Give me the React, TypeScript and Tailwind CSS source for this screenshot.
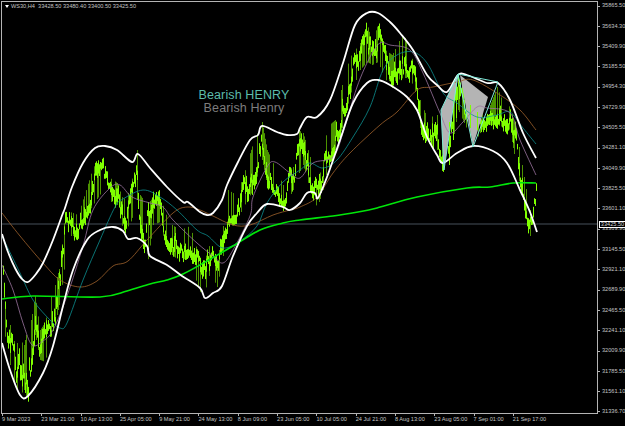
const PRICES = [
  "35865.50", "35634.30", "35409.90", "35185.50", "34954.30", "34729.90", "34505.50",
  "34281.10", "34049.90", "33825.50", "33601.10", "33369.90", "33145.50", "32921.10",
  "32689.90", "32465.50", "32241.10", "32009.90", "31785.50", "31561.10", "31336.70",
];

const TIMES = [
  "9 Mar 2023", "23 Mar 21:00", "10 Apr 13:00", "25 Apr 05:00", "9 May 21:00", "24 May 13:00", "8 Jun 09:00",
  "23 Jun 05:00", "10 Jul 05:00", "24 Jul 21:00", "8 Aug 13:00", "23 Aug 05:00", "7 Sep 01:00", "21 Sep 17:00",
];

// curves read off the picture, page coordinates
const UPPER = "2,234 8,252 15,268 22,279 28,282 36,274 43,263 53,240 63,213 65,208 72,187 83,163 95,148 105,146 117,150 132,162 138,154 150,168 167,187 183,202 188,202 200,212 207,215 213,213 222,200 227,185 238,162 250,140 258,135 262,126 277,132 287,135 297,134 300,128 307,117 317,117 330,100 343,63 355,25 367,13 378,13 390,22 400,33 413,50 427,75 437,85 447,92 458,75 467,75 487,83 498,83 510,100 523,133 536,158";
const LOWER = "2,343 10,370 20,395 28,396 43,373 53,346 63,306 73,270 87,240 100,230 113,227 123,231 128,239 137,238 147,246 150,256 167,265 182,276 200,288 205,298 213,293 222,286 233,256 247,226 257,213 267,204 283,207 290,210 300,203 307,193 315,193 318,198 327,177 340,140 353,103 367,83 378,80 390,85 407,97 417,110 427,137 437,155 443,163 457,153 473,146 493,151 507,163 520,190 530,212 537,232";
const GREEN_MA = "2,299 33,296 100,297 127,291 150,284 167,280 183,274 207,261 233,246 260,230 283,223 300,220 333,216 358,212 377,208 417,197 467,188 490,187 513,183 536,183";
const BROWN = "2,213 20,236 43,263 60,280 80,287 97,281 113,266 128,261 147,240 173,213 187,207 200,210 213,216 233,225 250,225 273,215 290,210 300,207 317,197 333,173 350,153 380,125 397,112 417,90 433,87 457,82 473,80 500,95 520,110 536,130";
const TEAL = "2,236 20,273 33,300 50,320 60,328 67,323 83,280 100,240 115,207 123,199 143,190 160,197 177,210 197,230 208,236 223,248 240,241 257,226 267,203 283,182 300,170 310,163 323,168 337,160 353,137 370,107 383,70 397,55 413,52 427,63 443,93 457,103 477,117 497,115 510,112 523,128 536,144";
const MAUVE = "2,265 13,290 23,323 32,345 43,341 53,330 67,296 83,246 93,210 110,188 120,185 132,197 150,203 163,207 173,220 197,243 213,256 223,263 233,250 250,216 253,197 267,167 275,162 290,173 300,178 313,163 333,157 343,133 357,87 370,57 380,43 390,45 410,50 423,73 440,113 450,133 463,122 477,107 487,108 510,113 520,140 536,175";

// [x, high y, low y]
const PRICE_KEYS: [number, number, number][] = [
  [3, 265, 300], [6, 320, 355], [10, 325, 365], [15, 345, 385], [20, 340, 395], [24, 345, 390], [28, 325, 402],
  [31, 320, 370], [35, 296, 335], [40, 330, 360], [45, 322, 362], [50, 300, 340], [55, 285, 325], [60, 265, 300],
  [65, 213, 262], [70, 212, 236], [78, 215, 236], [87, 187, 215], [93, 167, 205], [103, 160, 190], [107, 176, 200],
  [117, 183, 205], [123, 200, 230], [130, 190, 225], [137, 150, 200], [140, 195, 232], [147, 205, 266], [153, 197, 225],
  [160, 195, 222], [165, 213, 245], [172, 225, 255], [180, 230, 262], [190, 226, 255], [197, 250, 285], [203, 265, 299],
  [210, 243, 272], [217, 262, 287], [223, 226, 256], [228, 190, 225], [236, 195, 222], [243, 177, 208], [253, 143, 190],
  [262, 122, 160], [267, 150, 185], [277, 172, 200], [283, 185, 208], [288, 170, 200], [293, 167, 190], [298, 130, 175],
  [303, 133, 165], [310, 157, 190], [317, 185, 208], [323, 160, 190], [327, 127, 170], [335, 120, 150], [343, 80, 125],
  [350, 57, 95], [360, 43, 70], [367, 23, 62], [372, 45, 65], [378, 23, 62], [385, 50, 80], [392, 55, 82], [403, 33, 78],
  [410, 50, 78], [415, 72, 92], [420, 100, 128], [427, 118, 145], [437, 115, 150], [443, 135, 170], [453, 97, 140],
  [458, 77, 110], [465, 95, 125], [473, 105, 145], [483, 100, 128], [490, 105, 125], [497, 87, 125], [505, 108, 128],
  [510, 106, 130], [517, 135, 172], [522, 165, 195], [527, 195, 225], [530, 210, 236], [533, 200, 226], [536, 183, 224],
];

const lerpKey = (x: number) => {
  for (let i = 1; i < PRICE_KEYS.length; i++) {
    const [x1, h1, l1] = PRICE_KEYS[i];
    if (x <= x1) {
      const [x0, h0, l0] = PRICE_KEYS[i - 1];
      const t = (x - x0) / (x1 - x0);
      return [h0 + (h1 - h0) * t, l0 + (l1 - l0) * t];
    }
  }
  return [PRICE_KEYS[PRICE_KEYS.length - 1][1], PRICE_KEYS[PRICE_KEYS.length - 1][2]];
};

const buildBars = () => {
  let seed = 71;
  const next = () => {
    seed = (seed * 16807) % 2147483647;
    return seed / 2147483647;
  };
  let bodies = "";
  let wicks = "";
  let pos = 0.5;
  for (let x = 3; x <= 536; x++) {
    const [hi, lo] = lerpKey(x);
    const span = lo - hi;
    pos = Math.min(0.9, Math.max(0.1, pos + (next() - 0.5) * 0.7));
    const mid = hi + span * pos;
    const len = 2.5 + next() * 6;
    bodies += `M${x + 0.5} ${(mid - len).toFixed(1)}V${(mid + len).toFixed(1)}`;
    // long wicks every few bars, dimmer in the picture
    if (next() < 0.35) wicks += `M${x + 0.5} ${hi.toFixed(1)}V${lo.toFixed(1)}`;
  }
  return { bodies, wicks };
};

// smooth line through the points
const smooth = (points: string) => {
  const p = points.split(" ").map((s) => s.split(",").map(Number));
  let d = `M${p[0][0]} ${p[0][1]}`;
  for (let i = 0; i < p.length - 1; i++) {
    const a = p[Math.max(i - 1, 0)];
    const b = p[i];
    const c = p[i + 1];
    const e = p[Math.min(i + 2, p.length - 1)];
    const c1x = b[0] + (c[0] - a[0]) / 6;
    const c1y = b[1] + (c[1] - a[1]) / 6;
    const c2x = c[0] - (e[0] - b[0]) / 6;
    const c2y = c[1] - (e[1] - b[1]) / 6;
    d += `C${c1x.toFixed(1)} ${c1y.toFixed(1)} ${c2x.toFixed(1)} ${c2y.toFixed(1)} ${c[0]} ${c[1]}`;
  }
  return d;
};

const Chart = () => {
  const { bodies, wicks } = buildBars();
  return (
    <svg width={595} height={411} viewBox="2 2 595 411" className="block">
      <line x1={2} x2={597} y1={224} y2={224} stroke="#46505a" strokeWidth={1} />
      <path d={wicks} stroke="#5fb800" strokeWidth={0.8} fill="none" />
      <path d={bodies} stroke="#80ff00" strokeWidth={1} fill="none" />
      <polygon points="441,110 444,170 458,74" fill="#b4b4b4" />
      <polygon points="460,75 488,97 473,146" fill="#b4b4b4" />
      <path d="M449.5 122V165M453.5 100V140M456.5 82V118M470.5 105V128M477.5 112V130" stroke="#80ff00" strokeWidth={1} fill="none" />
      <path d={smooth(BROWN)} fill="none" stroke="#a0622c" strokeWidth={0.8} />
      <path d={smooth(TEAL)} fill="none" stroke="#0d8f90" strokeWidth={0.8} />
      <path d={smooth(MAUVE)} fill="none" stroke="#9a749e" strokeWidth={0.8} />
      <path d={smooth(GREEN_MA)} fill="none" stroke="#00e60a" strokeWidth={1.6} />
      <path d={smooth(UPPER)} fill="none" stroke="#ffffff" strokeWidth={1.8} />
      <path d={smooth(LOWER)} fill="none" stroke="#ffffff" strokeWidth={1.8} />
      <polyline points="441,110 458,74 473,147 498,82 458,74" fill="none" stroke="#7fe9d9" strokeWidth={1} />
      <polyline points="441,110 444,170 458,74" fill="none" stroke="#7fe9d9" strokeWidth={1} />
    </svg>
  );
};

export default function App() {
  return (
    <div className="w-[625px] h-[426px] bg-black overflow-hidden font-['Liberation_Sans',sans-serif] text-[5.6px] leading-none text-[#c4c4c4]">
      <div className="flex pt-px pl-px h-[413px]">
        <div className="relative w-[597px] h-[413px] border border-[#b4b4b4]">
          <Chart />
          <div className="absolute left-[3px] top-[2px] flex items-center gap-[2px]">
            <span className="w-0 h-0 border-x-[2px] border-t-[3px] border-x-transparent border-t-white" />
            <span className="whitespace-pre">WS30,H4  33428.50 33480.40 33400.50 33425.50</span>
          </div>
          <div className="absolute left-[150px] top-[87px] w-[184px] flex flex-col items-center text-[12.5px] leading-[12.5px] tracking-[0.12px]">
            <span className="text-[#5cbcab]">Bearish HENRY</span>
            <span className="text-[#7d7d7d]">Bearish Henry</span>
          </div>
        </div>
        <div className="relative flex-1 flex flex-col justify-between pt-[2px] h-[414px]">
          {PRICES.map((p) => (
            <div key={p} className="flex items-center h-[6px] gap-[2px]">
              <span className="w-[2px] h-px bg-[#b4b4b4]" />
              <span>{p}</span>
            </div>
          ))}
          <div className="absolute left-[1px] top-[220px] w-[27px] h-[7px] border border-white bg-black flex items-center justify-center text-[#d8d8d8]">
            33425.50
          </div>
        </div>
      </div>
      <div className="flex pl-[2px] pt-px">
        {TIMES.map((t) => (
          <div key={t} className="w-[39.3px] shrink-0 flex flex-col items-start">
            <span className="w-px h-[2px] bg-[#b4b4b4]" />
            <span className="whitespace-nowrap mt-px">{t}</span>
          </div>
        ))}
      </div>
    </div>
  );
}
